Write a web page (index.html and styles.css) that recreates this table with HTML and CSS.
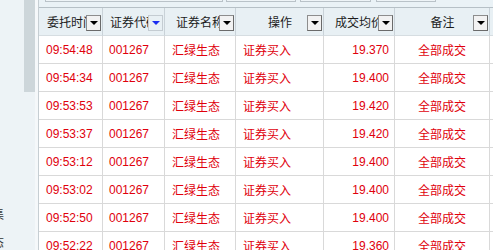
FILE: index.html
```html
<!DOCTYPE html>
<html lang="zh-CN">
<head>
<meta charset="utf-8">
<title>委托成交</title>
<link rel="stylesheet" href="styles.css">
</head>
<body>
<div class="screen">
  <aside class="side">
    <div class="menu">
      <div class="menu-item">集</div>
      <div class="menu-item">态</div>
    </div>
    <div class="track"><div class="thumb"></div></div>
    <div class="strip"></div>
  </aside>
  <main class="main">
    <div class="toolbar">
      <span class="tb tb1"></span>
      <span class="tb tb2"></span>
      <span class="tb tb3"></span>
      <span class="tb tb4"></span>
    </div>
    <div class="grid">
      <div class="hc pl8"><span class="hl">委托时间</span><span class="dd"><i class="tri"></i></span></div>
      <div class="hc pl7"><span class="hl">证券代码</span><span class="dd flat"><i class="tri blue"></i></span></div>
      <div class="hc pl11"><span class="hl">证券名称</span><span class="dd"><i class="tri"></i></span></div>
      <div class="hc"><span class="hl center">操作</span><span class="dd"><i class="tri"></i></span></div>
      <div class="hc pl11"><span class="hl">成交均价</span><span class="dd"><i class="tri"></i></span></div>
      <div class="hc"><span class="hl center">备注</span><span class="dd"><i class="tri"></i></span></div>
      <div class="hc end"></div>

      <div class="c t">09:54:48</div><div class="c k">001267</div><div class="c n">汇绿生态</div><div class="c o">证券买入</div><div class="c p">19.370</div><div class="c r">全部成交</div><div class="c end"></div>
      <div class="c t">09:54:34</div><div class="c k">001267</div><div class="c n">汇绿生态</div><div class="c o">证券买入</div><div class="c p">19.400</div><div class="c r">全部成交</div><div class="c end"></div>
      <div class="c t">09:53:53</div><div class="c k">001267</div><div class="c n">汇绿生态</div><div class="c o">证券买入</div><div class="c p">19.420</div><div class="c r">全部成交</div><div class="c end"></div>
      <div class="c t">09:53:37</div><div class="c k">001267</div><div class="c n">汇绿生态</div><div class="c o">证券买入</div><div class="c p">19.420</div><div class="c r">全部成交</div><div class="c end"></div>
      <div class="c t">09:53:12</div><div class="c k">001267</div><div class="c n">汇绿生态</div><div class="c o">证券买入</div><div class="c p">19.400</div><div class="c r">全部成交</div><div class="c end"></div>
      <div class="c t">09:53:02</div><div class="c k">001267</div><div class="c n">汇绿生态</div><div class="c o">证券买入</div><div class="c p">19.400</div><div class="c r">全部成交</div><div class="c end"></div>
      <div class="c t">09:52:50</div><div class="c k">001267</div><div class="c n">汇绿生态</div><div class="c o">证券买入</div><div class="c p">19.400</div><div class="c r">全部成交</div><div class="c end"></div>
      <div class="c t">09:52:22</div><div class="c k">001267</div><div class="c n">汇绿生态</div><div class="c o">证券买入</div><div class="c p">19.360</div><div class="c r">全部成交</div><div class="c end"></div>
    </div>
  </main>
</div>
</body>
</html>
```

FILE: styles.css
```css
* { box-sizing: border-box; }
html, body { margin: 0; padding: 0; }
body {
  width: 493px;
  height: 250px;
  overflow: hidden;
  background: #ffffff;
  font-family: "Liberation Sans", "Noto Sans CJK SC", sans-serif;
  font-size: 12px;
}
.screen { display: flex; height: 250px; }

/* left panel */
.side {
  width: 39px;
  flex: none;
  display: flex;
  background: #edf3f6;
  border-right: 1px solid #c6ced3;
}
.menu {
  width: 24px;
  overflow: hidden;
  padding-top: 201px;
  color: #333333;
}
.menu-item {
  height: 28px;
  line-height: 28px;
  white-space: nowrap;
  margin-left: -8px;
}
.track { width: 11px; }
.thumb { height: 92px; background: #cdd6da; }
.strip { width: 3px; background: #f5f8fa; }

/* main area */
.main { flex: 1; min-width: 0; display: flex; flex-direction: column; }
.toolbar {
  height: 8px;
  flex: none;
  display: flex;
  overflow: hidden;
  background: #eaf2f6;
  border-bottom: 1px solid #b6c0c6;
}
.tb {
  flex: none;
  height: 22px;
  margin-top: -20px;
  border: 1px solid #b9c2c8;
  background: #eef4f7;
}
.tb1 { width: 178px; margin-left: 6px; }
.tb2 { width: 70px; margin-left: 3px; }
.tb3 { width: 71px; margin-left: 4px; }
.tb4 { width: 60px; margin-left: 5px; }

.grid {
  display: grid;
  grid-template-columns: 64px 62px 71px 88px 71px 95px 1fr;
  grid-auto-rows: 28px;
}

/* header cells */
.hc {
  display: flex;
  align-items: center;
  overflow: hidden;
  white-space: nowrap;
  background: #e8f0f4;
  color: #1c1c1c;
  border-right: 1px solid #c9d2d8;
  border-bottom: 1px solid #d6dde1;
}
.hc.end { border-right: none; }
.pl7 { padding-left: 7px; }
.pl8 { padding-left: 8px; }
.pl11 { padding-left: 11px; }
.hl { flex: 1; min-width: 0; overflow: hidden; }
.hl.center { text-align: center; padding-left: 17px; }
.dd {
  flex: none;
  width: 15px;
  height: 16px;
  margin: 3px 1px 0 0;
  display: flex;
  align-items: center;
  justify-content: center;
  background: #f2f2f2;
  border: 1px solid #8d8d8d;
  border-right-color: #6a6a6a;
  border-bottom-color: #6a6a6a;
}
.dd.flat { background: #e8f0f4; border-color: #c4ccd2; }
.tri {
  width: 0;
  height: 0;
  border-left: 4px solid transparent;
  border-right: 4px solid transparent;
  border-top: 4px solid #000000;
}
.tri.blue { border-top-color: #1a2cf0; }

/* body cells */
.c {
  display: flex;
  align-items: center;
  overflow: hidden;
  white-space: nowrap;
  color: #e0000c;
  border-right: 1px solid #d9d9d9;
  border-bottom: 1px solid #d9d9d9;
}
.c.end { border-right: none; }
.t { padding-left: 7px; }
.k { padding-left: 6px; }
.n { padding-left: 7px; }
.o { padding-left: 7px; }
.p { justify-content: flex-end; padding-right: 5px; }
.r { justify-content: center; }
```
